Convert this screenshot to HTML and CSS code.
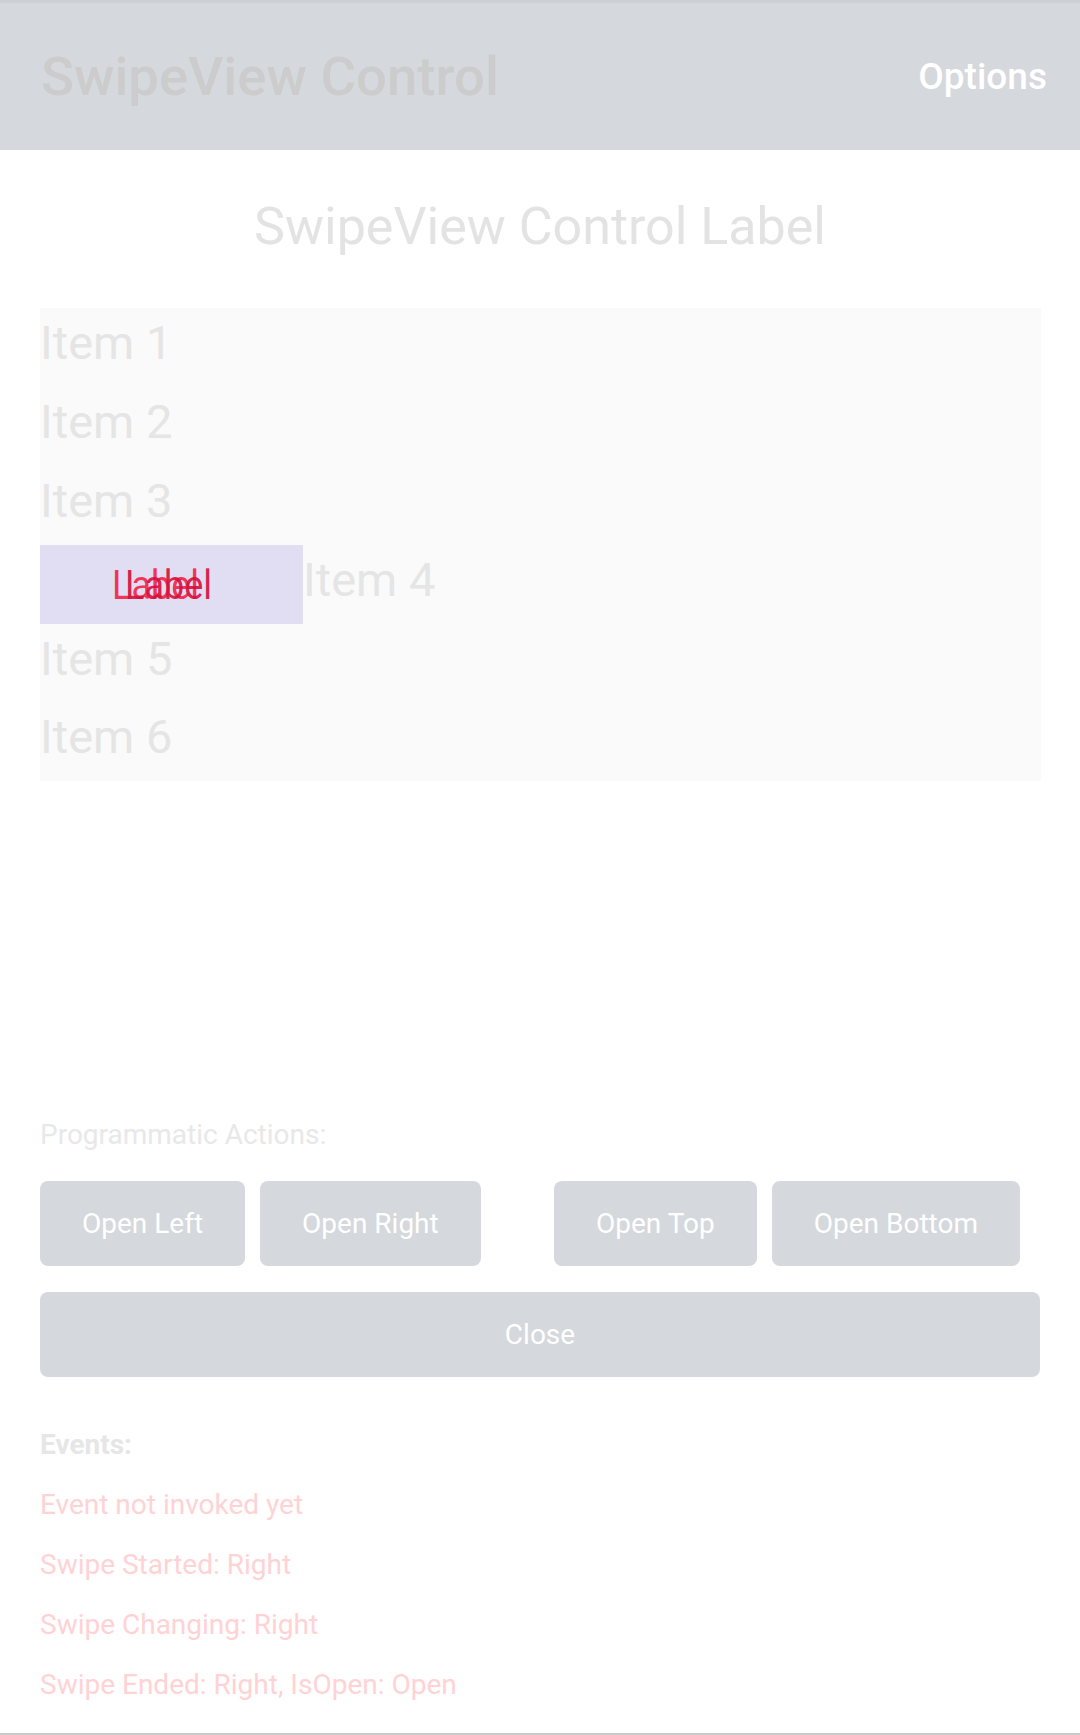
FILE: index.html
```html
<!DOCTYPE html>
<html lang="en">
<head>
<meta charset="utf-8">
<title>SwipeView Control</title>
<link rel="stylesheet" href="styles.css">
</head>
<body>
<div class="page">
  <header class="appbar">
    <h1 class="appbar-title">SwipeView Control</h1>
    <span class="appbar-action">Options</span>
  </header>

  <main class="content">
    <h2 class="subtitle">SwipeView Control Label</h2>

    <ul class="list">
      <li class="row"><span class="row-text">Item 1</span></li>
      <li class="row"><span class="row-text">Item 2</span></li>
      <li class="row"><span class="row-text">Item 3</span></li>
      <li class="row row-open">
        <div class="swipe-item">
          <span class="swipe-label swipe-label-a">Label</span>
          <span class="swipe-label swipe-label-b">Label</span>
        </div>
        <span class="row-text">Item 4</span>
      </li>
      <li class="row"><span class="row-text">Item 5</span></li>
      <li class="row"><span class="row-text">Item 6</span></li>
    </ul>

    <p class="section-label">Programmatic Actions:</p>

    <div class="actions">
      <div class="action-group">
        <button class="btn">Open Left</button>
        <button class="btn">Open Right</button>
      </div>
      <div class="action-group">
        <button class="btn">Open Top</button>
        <button class="btn">Open Bottom</button>
      </div>
    </div>
    <button class="btn btn-wide">Close</button>

    <div class="events">
      <p class="events-title">Events:</p>
      <p class="event">Event not invoked yet</p>
      <p class="event">Swipe Started: Right</p>
      <p class="event">Swipe Changing: Right</p>
      <p class="event">Swipe Ended: Right, IsOpen: Open</p>
    </div>
  </main>
</div>
</body>
</html>
```

FILE: styles.css
```css
* {
  box-sizing: border-box;
}

html, body {
  margin: 0;
  padding: 0;
  background: #ffffff;
}

body {
  font-family: Roboto, "Noto Sans", "Liberation Sans", sans-serif;
}

.page {
  width: 1080px;
  height: 1735px;
  display: flex;
  flex-direction: column;
  border-bottom: 2px solid #c9c9c9;
  overflow: hidden;
}

/* App bar */
.appbar {
  height: 150px;
  flex: none;
  background: #d5d8dc;
  border-top: 3px solid #cdd0d4;
  display: flex;
  align-items: center;
  justify-content: space-between;
  padding: 0 33px 0 41px;
}

.appbar-title {
  margin: 0;
  font-size: 54.5px;
  line-height: 1;
  font-weight: 500;
  color: #cbcccb;
}

.appbar-action {
  font-size: 37px;
  line-height: 1;
  font-weight: 500;
  color: #ffffff;
}

/* Content */
.content {
  padding: 0 40px 0 40px;
  display: flex;
  flex-direction: column;
}

.subtitle {
  margin: 51px 0 0 0;
  font-size: 52px;
  line-height: 1;
  font-weight: 400;
  color: #e3e3e3;
  text-align: center;
}

.list {
  list-style: none;
  margin: 55px 0 0 0;
  padding: 0;
  width: 1001px;
  background: #fafafa;
}

.row {
  height: 78.9px;
  display: flex;
  align-items: flex-start;
  overflow: hidden;
}

.row-text {
  display: block;
  padding-top: 11px;
  font-size: 47px;
  line-height: 47px;
  color: #e5e5e5;
  white-space: nowrap;
}

.swipe-item {
  position: relative;
  flex: none;
  width: 263px;
  height: 100%;
  background: #e1ddf3;
}

.swipe-label {
  position: absolute;
  top: calc(50% + 2px);
  transform: translateY(-50%) scaleX(0.9);
  transform-origin: left center;
  font-size: 40px;
  line-height: 1;
  white-space: nowrap;
}

.swipe-label-a {
  left: 72px;
  color: rgba(242, 42, 78, 0.95);
}

.swipe-label-b {
  left: 85px;
  color: rgba(214, 16, 60, 0.92);
}

.section-label {
  margin: 340px 0 0 0;
  font-size: 28px;
  line-height: 1;
  color: #e8e8e8;
}

.actions {
  margin-top: 32px;
  display: grid;
  grid-template-columns: 486px 486px;
  column-gap: 28px;
}

.action-group {
  display: flex;
  gap: 15px;
}

.btn {
  height: 85px;
  padding: 0 42px;
  border: none;
  border-radius: 8px;
  background: #d5d8dc;
  color: #ffffff;
  font-family: Roboto, "Noto Sans", "Liberation Sans", sans-serif;
  font-size: 28px;
  line-height: 1;
  white-space: nowrap;
}

.btn-wide {
  margin-top: 26px;
  width: 1000px;
}

.events {
  margin-top: 38px;
}

.events-title,
.event {
  margin: 0;
  font-size: 28px;
  line-height: 60px;
}

.events-title {
  font-weight: 700;
  color: #e6e6e6;
}

.event {
  color: #ffd2d4;
}
```
